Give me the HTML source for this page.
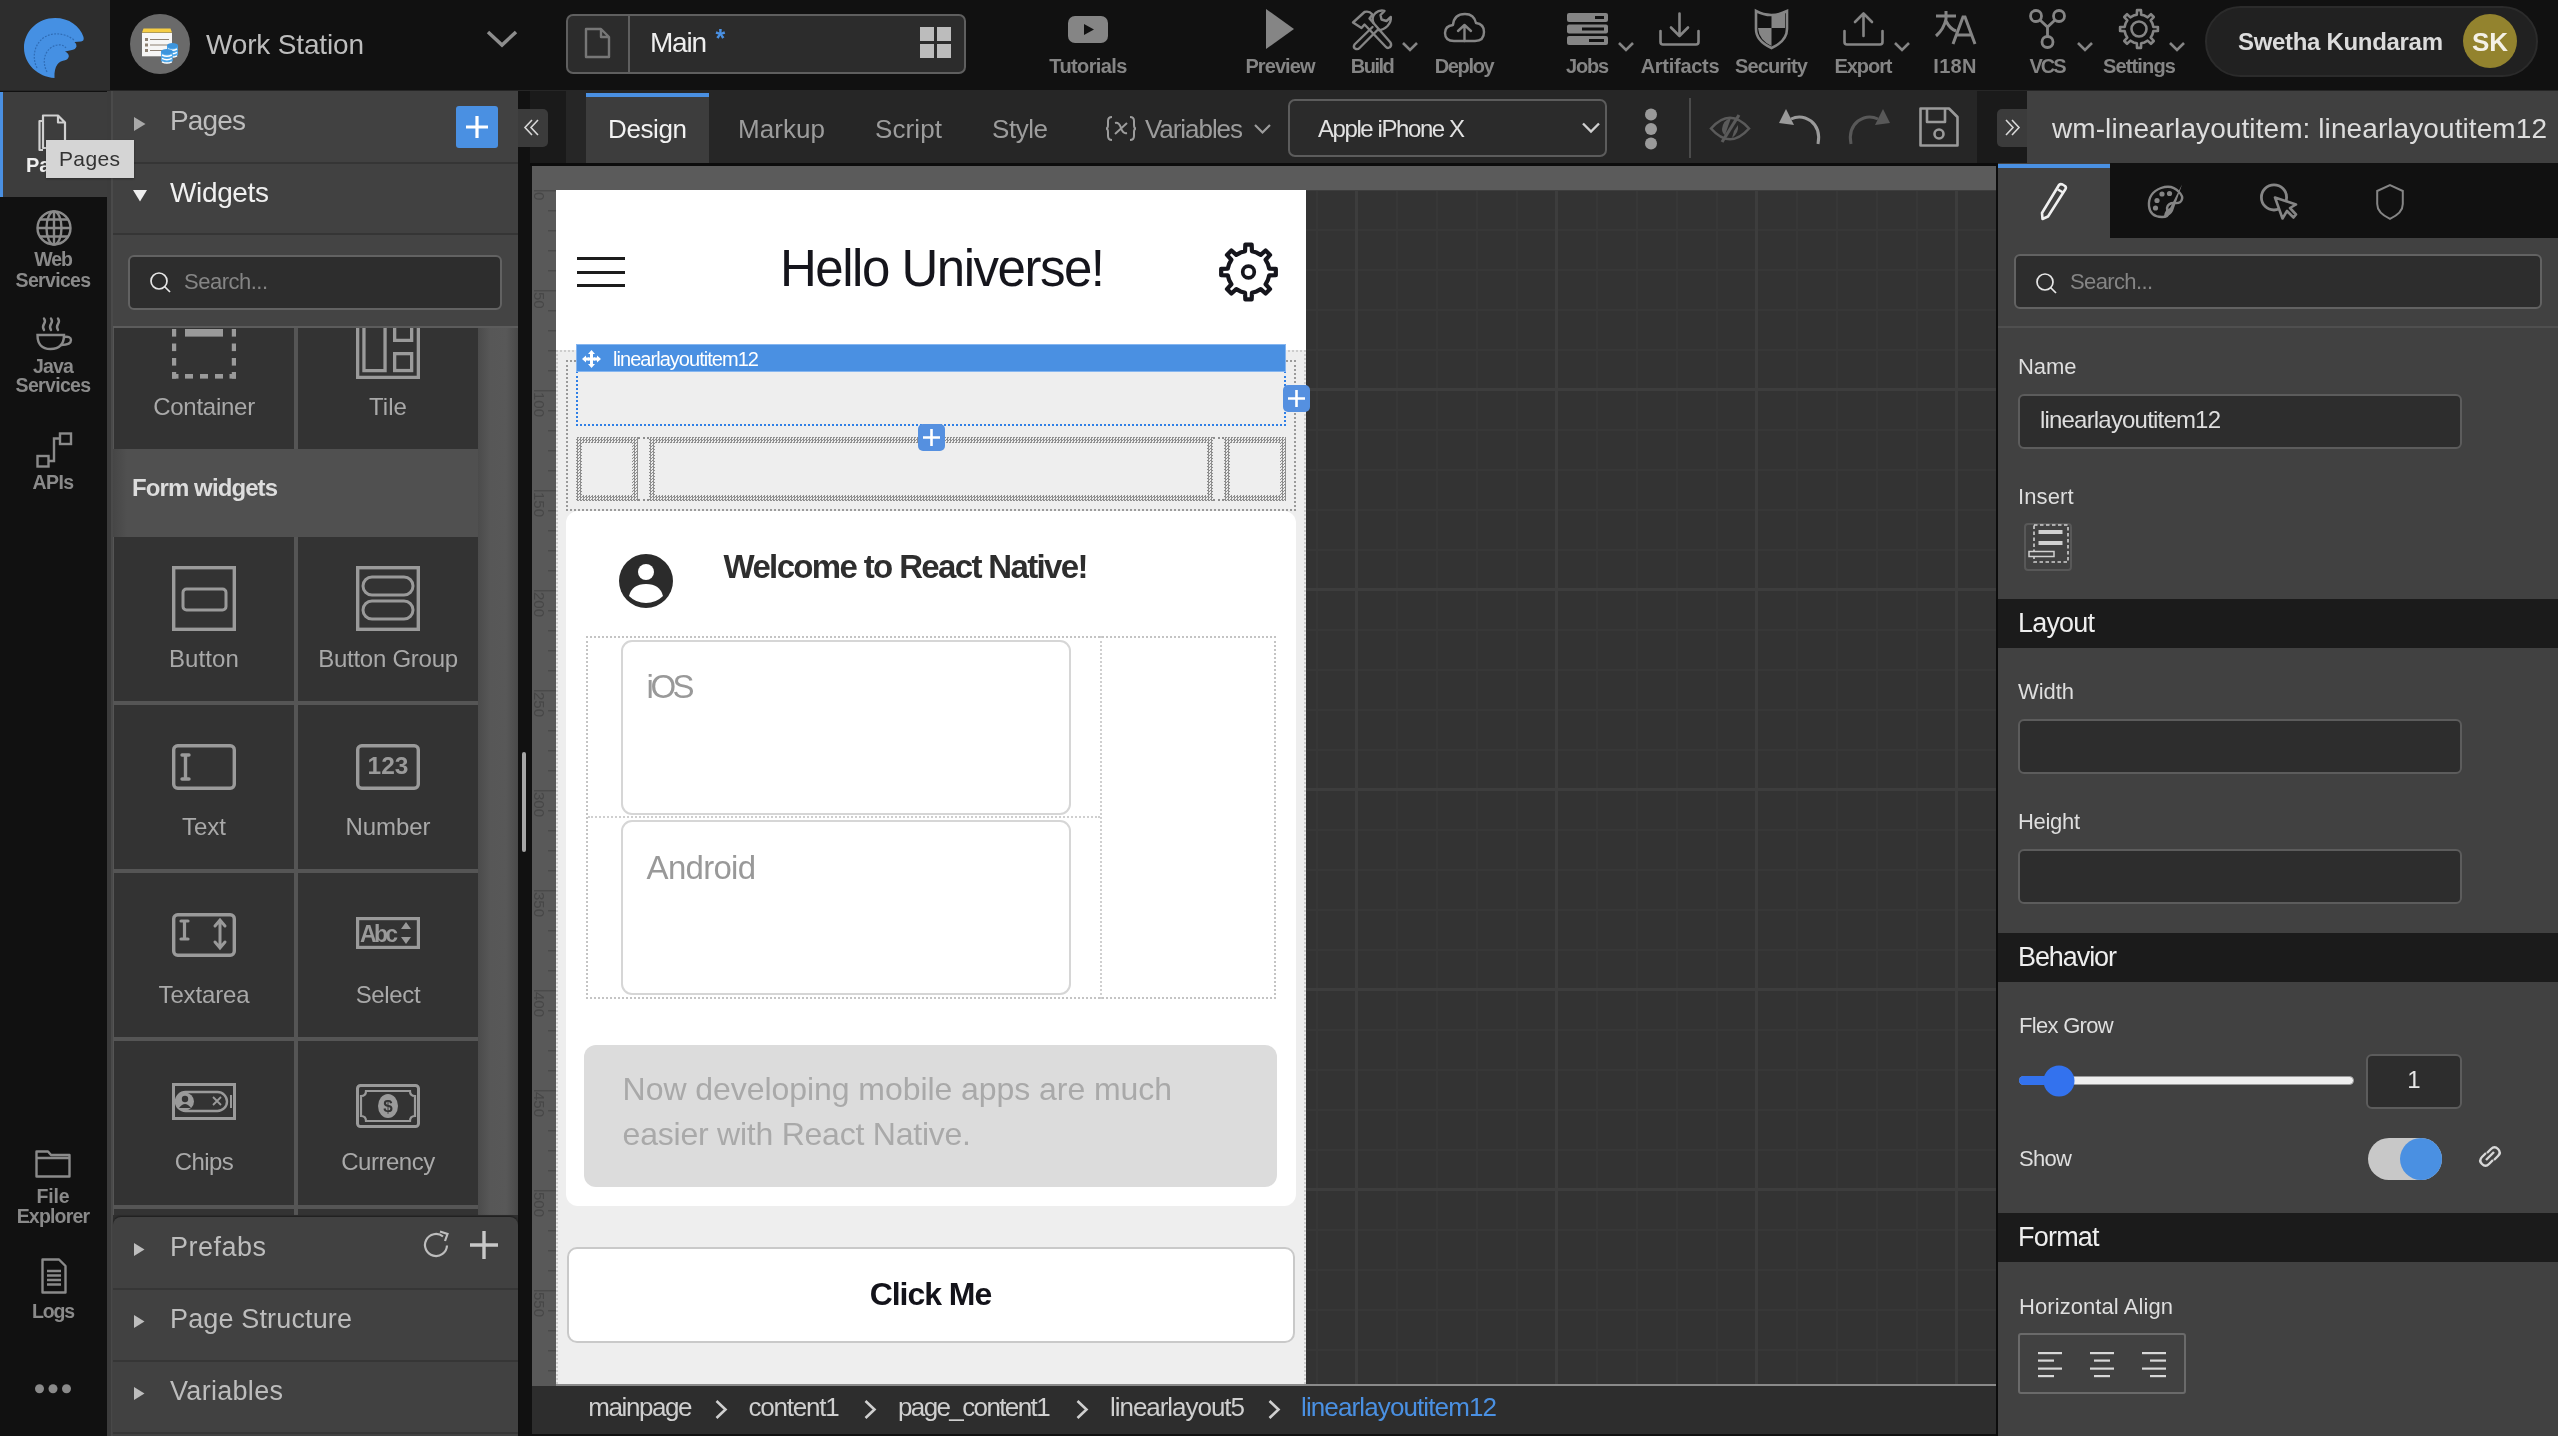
<!DOCTYPE html>
<html><head><meta charset="utf-8">
<style>
*{box-sizing:border-box;margin:0;padding:0}
html,body{width:2558px;height:1436px;overflow:hidden;background:#111;font-family:"Liberation Sans",sans-serif}
.a{position:absolute}
svg{position:absolute;overflow:visible}
</style></head>
<body>
<div style="position:absolute;left:0;top:0;width:2558px;height:1436px;overflow:hidden;will-change:transform">
<div class="a" style="left:0px;top:0px;width:2558px;height:90px;background:#111;"></div>
<div class="a" style="left:0px;top:0px;width:110px;height:90px;background:#2d2d2d;"></div>
<div class="a" style="left:0px;top:90px;width:2558px;height:1px;background:#262626;"></div>
<div class="a" style="left:0px;top:91px;width:107px;height:1345px;background:#111;"></div>
<div class="a" style="left:0px;top:92px;width:110px;height:105px;background:#3d3d3d;"></div>
<div class="a" style="left:0px;top:92px;width:3px;height:105px;background:#4a90e2;"></div>
<div class="a" style="left:107px;top:91px;width:5px;height:1345px;background:#3a3a3a;"></div>
<div class="a" style="left:112px;top:91px;width:406px;height:1345px;background:#414141;"></div>
<div class="a" style="left:518px;top:91px;width:14px;height:1345px;background:#111;"></div>
<div class="a" style="left:530px;top:91px;width:36px;height:72px;background:#1e1e1e;"></div>
<div class="a" style="left:566px;top:91px;width:1411px;height:72px;background:#262626;"></div>
<div class="a" style="left:1977px;top:91px;width:50px;height:72px;background:#111;"></div>
<div class="a" style="left:532px;top:166px;width:1464px;height:24px;background:#5b5b5b;"></div>
<div class="a" style="left:532px;top:190px;width:24px;height:1196px;background:#5a5a5a;"></div>
<div class="a" style="left:532px;top:1386px;width:1464px;height:50px;background:#2d2d2d;"></div>
<div class="a" style="left:1996px;top:163px;width:2px;height:1273px;background:#111;"></div>
<div class="a" style="left:2027px;top:91px;width:531px;height:72px;background:#404040;"></div>
<div class="a" style="left:1998px;top:163px;width:560px;height:75px;background:#111;"></div>
<div class="a" style="left:1998px;top:238px;width:560px;height:1198px;background:#414141;"></div>
<svg style="left:24px;top:18px;" width="61" height="61" viewBox="0 0 61 61"><path fill="#4590e3" d="M30.5 60 C14 59 0 46 0 30 C0 13 14 0 31 0 C45 0 56 8 59.5 19 Q60.5 23 57 23.5 L50.5 24 Q53 26 52.5 28.5 Q51.5 31.5 48 32 L41 33.5 Q45 35.5 44.8 38.5 Q44 42 40 42.5 C35 43.5 30 47 30.5 60 Z"/><path fill="none" stroke="#2f6cb5" stroke-width="1.2" stroke-dasharray="1.8 1.4" d="M13 50 C8 40 10 28 18 21 C26 14 40 14 50 22 M23 54 C18 44 20 34 28 29 C33 26 39 26 42 30"/></svg>
<svg style="left:130px;top:14px;" width="60" height="60" viewBox="0 0 60 60"><circle cx="30" cy="30" r="30" fill="#6a6a6a"/><path d="M12 42.3 V19 H42 V42.3 Z" fill="#f6f6f6"/><path d="M12 18.5 L13.5 14.5 H40.5 L42 18.5 Z" fill="#f5cd45"/><g fill="#8c8072"><rect x="15" y="24" width="3" height="3"/><rect x="15" y="29.5" width="3" height="3"/><rect x="15" y="35" width="3" height="3"/></g><g stroke="#8c8072" stroke-width="1"><line x1="20" y1="25.5" x2="39" y2="25.5"/><line x1="20" y1="31" x2="39" y2="31"/><line x1="20" y1="36.5" x2="36" y2="36.5"/></g><path d="M37 31.6 V40.4 A5.5 2.6 0 0 0 48 40.4 V31.6 Z" fill="#4ea6e8"/><ellipse cx="42.5" cy="31.6" rx="5.5" ry="2.6" fill="#3d95dd"/><path d="M38 35.0 Q42.5 37.6 47 35.0" fill="none" stroke="#fff" stroke-width="1.5"/><path d="M38 38.4 Q42.5 41.0 47 38.4" fill="none" stroke="#fff" stroke-width="1.5"/><path d="M38 41.8 Q42.5 44.4 47 41.8" fill="none" stroke="#fff" stroke-width="1.5"/><path d="M31 37.6 V46.4 A5.9 2.6 0 0 0 42.8 46.4 V37.6 Z" fill="#4ea6e8"/><ellipse cx="36.9" cy="37.6" rx="5.9" ry="2.6" fill="#3d95dd"/><path d="M32 41.0 Q36.9 43.6 41.8 41.0" fill="none" stroke="#fff" stroke-width="1.5"/><path d="M32 44.4 Q36.9 47.0 41.8 44.4" fill="none" stroke="#fff" stroke-width="1.5"/><path d="M32 47.8 Q36.9 50.4 41.8 47.8" fill="none" stroke="#fff" stroke-width="1.5"/></svg>
<div class="a" style="top:31.30px;font-size:28px;color:#bdbdbd;font-weight:normal;letter-spacing:-0.161px;line-height:1;white-space:nowrap;left:206px;">Work Station</div>
<svg style="left:486px;top:30px;" width="32" height="18" viewBox="0 0 32 18"><path d="M2 2 L16 15 L30 2" fill="none" stroke="#8d8d8d" stroke-width="3.5"/></svg>
<div class="a" style="left:566px;top:14px;width:400px;height:60px;background:#2c2c2c;border:2px solid #5f5f5f;border-radius:7px"></div>
<div class="a" style="left:628px;top:16px;width:2px;height:56px;background:#5f5f5f;"></div>
<svg style="left:584px;top:27px;" width="27" height="32" viewBox="0 0 27 32"><path d="M2 2 H17 L25 10 V30 H2 Z M17 2 V10 H25" fill="none" stroke="#777" stroke-width="2.4" stroke-linejoin="round"/></svg>
<div class="a" style="top:29.30px;font-size:28px;color:#eeeeee;font-weight:normal;letter-spacing:-1.231px;line-height:1;white-space:nowrap;left:650px;">Main</div>
<div class="a" style="top:25.84px;font-size:25px;color:#4a90e2;font-weight:bold;letter-spacing:0.000px;line-height:1;white-space:nowrap;left:715.5px;">*</div>
<svg style="left:920px;top:27px;" width="32" height="32" viewBox="0 0 32 32"><g fill="#bcbcbc"><rect x="0" y="0" width="14" height="14"/><rect x="17" y="0" width="14" height="14"/><rect x="0" y="17" width="14" height="14"/><rect x="17" y="17" width="14" height="14"/></g></svg>
<svg style="left:1068px;top:16px;" width="40" height="27" viewBox="0 0 40 27"><rect x="0" y="0" width="40" height="27" rx="7" fill="#858585"/><path d="M16 8 L26 13.5 L16 19 Z" fill="#111"/></svg>
<div class="a" style="top:56.07px;font-size:20px;color:#858585;font-weight:bold;letter-spacing:-0.621px;line-height:1;white-space:nowrap;left:488px;width:1200px;text-align:center;">Tutorials</div>
<svg style="left:1266px;top:9px;" width="28" height="40" viewBox="0 0 28 40"><path d="M0 0 L28 20 L0 40 Z" fill="#858585"/></svg>
<div class="a" style="top:56.07px;font-size:20px;color:#858585;font-weight:bold;letter-spacing:-0.934px;line-height:1;white-space:nowrap;left:680px;width:1200px;text-align:center;">Preview</div>
<svg style="left:1352px;top:9px;" width="40" height="40" viewBox="0 0 40 40"><g fill="none" stroke="#858585" stroke-width="2.4" stroke-linejoin="round" stroke-linecap="round"><path d="M1 13.5 L12.5 3 Q17 1.5 20.5 5.5 L17.5 9.5 L38.5 33.5 Q40 36.5 37.8 38.3 Q35.5 39.8 33.5 37.5 L12.5 15.5 L9.5 19 Z"/><path d="M20.5 18 L2.5 35.5 Q1 38 3 39.5 Q5.5 41 7.5 39 L25.5 21 Q31 21.5 35.5 17 Q39.5 12.5 38.8 8 L34.5 12 L29.5 10.5 L28.5 6 L32.5 1.8 Q27.5 0.5 23.5 4 Q19 8.5 21.5 14"/></g></svg>
<svg style="left:1402px;top:42px;" width="16" height="9" viewBox="0 0 16 9"><path d="M1 1 L8 8 L15 1" fill="none" stroke="#858585" stroke-width="2.6"/></svg>
<div class="a" style="top:56.07px;font-size:20px;color:#858585;font-weight:bold;letter-spacing:-1.498px;line-height:1;white-space:nowrap;left:772px;width:1200px;text-align:center;">Build</div>
<svg style="left:1444px;top:12px;" width="41" height="31" viewBox="0 0 41 31"><g fill="none" stroke="#858585" stroke-width="2.4" stroke-linejoin="round" stroke-linecap="round"><path d="M10 29 Q1 29 1 21 Q1 14 9 13 Q10 2 21 2 Q30 2 32 11 Q40 12 40 20 Q40 29 31 29 Z"/><path d="M20.5 29 V13 M14 19 L20.5 13 L27 19"/></g></svg>
<div class="a" style="top:56.07px;font-size:20px;color:#858585;font-weight:bold;letter-spacing:-1.336px;line-height:1;white-space:nowrap;left:864px;width:1200px;text-align:center;">Deploy</div>
<svg style="left:1567px;top:13px;" width="41" height="32" viewBox="0 0 41 32"><g fill="#858585"><rect x="0" y="0" width="41" height="9" rx="2"/><rect x="0" y="11.5" width="41" height="9" rx="2"/><rect x="0" y="23" width="41" height="9" rx="2"/></g><g fill="#111"><rect x="28" y="3" width="9" height="3"/><rect x="15" y="14.5" width="22" height="3"/><rect x="22" y="26" width="15" height="3"/></g></svg>
<svg style="left:1618px;top:42px;" width="16" height="9" viewBox="0 0 16 9"><path d="M1 1 L8 8 L15 1" fill="none" stroke="#858585" stroke-width="2.6"/></svg>
<div class="a" style="top:56.07px;font-size:20px;color:#858585;font-weight:bold;letter-spacing:-1.227px;line-height:1;white-space:nowrap;left:987px;width:1200px;text-align:center;">Jobs</div>
<svg style="left:1659px;top:12px;" width="41" height="34" viewBox="0 0 41 34"><g fill="none" stroke="#858585" stroke-width="2.6" stroke-linecap="round" stroke-linejoin="round"><path d="M1.5 19 V30 Q1.5 32.5 4 32.5 H37 Q39.5 32.5 39.5 30 V19"/><path d="M20.5 1.5 V24 M12 15.5 L20.5 24 L29 15.5"/></g></svg>
<div class="a" style="top:56.07px;font-size:20px;color:#858585;font-weight:bold;letter-spacing:-0.267px;line-height:1;white-space:nowrap;left:1080px;width:1200px;text-align:center;">Artifacts</div>
<svg style="left:1754px;top:9px;" width="35" height="40" viewBox="0 0 35 40"><path d="M2 2 Q17 10 33 2 V20 Q33 32 17.5 39 Q2 32 2 20 Z" fill="none" stroke="#858585" stroke-width="2.6"/><path d="M17.5 6 Q26 6 31 3.5 V19 H17.5 Z M17.5 19 H4 Q5 31 17.5 37 Z" fill="#858585"/></svg>
<div class="a" style="top:56.07px;font-size:20px;color:#858585;font-weight:bold;letter-spacing:-0.847px;line-height:1;white-space:nowrap;left:1171px;width:1200px;text-align:center;">Security</div>
<svg style="left:1843px;top:12px;" width="41" height="34" viewBox="0 0 41 34"><g fill="none" stroke="#858585" stroke-width="2.6" stroke-linecap="round" stroke-linejoin="round"><path d="M1.5 19 V30 Q1.5 32.5 4 32.5 H37 Q39.5 32.5 39.5 30 V19"/><path d="M20.5 24 V1.5 M12 10 L20.5 1.5 L29 10"/></g></svg>
<svg style="left:1894px;top:42px;" width="16" height="9" viewBox="0 0 16 9"><path d="M1 1 L8 8 L15 1" fill="none" stroke="#858585" stroke-width="2.6"/></svg>
<div class="a" style="top:56.07px;font-size:20px;color:#858585;font-weight:bold;letter-spacing:-1.068px;line-height:1;white-space:nowrap;left:1263px;width:1200px;text-align:center;">Export</div>
<svg style="left:1935px;top:11px;" width="42" height="34" viewBox="0 0 42 34"><g fill="none" stroke="#858585" stroke-width="3" stroke-linecap="butt"><path d="M1 5 H21 M11 0 V8 Q9 18 1 25 M11 10 Q15 18 21 20"/><path d="M18 33 L28 6 H30 L40 33 M22 24 H36"/></g></svg>
<div class="a" style="top:56.07px;font-size:20px;color:#858585;font-weight:bold;letter-spacing:0.251px;line-height:1;white-space:nowrap;left:1355px;width:1200px;text-align:center;">I18N</div>
<svg style="left:2029px;top:9px;" width="37" height="40" viewBox="0 0 37 40"><g fill="none" stroke="#858585" stroke-width="2.8"><circle cx="7" cy="7" r="5.5"/><circle cx="30" cy="7" r="5.5"/><circle cx="18.5" cy="33" r="5.5"/><path d="M11 11 L18.5 18 L26 11 M18.5 18 V27.5"/></g></svg>
<svg style="left:2077px;top:42px;" width="16" height="9" viewBox="0 0 16 9"><path d="M1 1 L8 8 L15 1" fill="none" stroke="#858585" stroke-width="2.6"/></svg>
<div class="a" style="top:56.07px;font-size:20px;color:#858585;font-weight:bold;letter-spacing:-2.062px;line-height:1;white-space:nowrap;left:1447px;width:1200px;text-align:center;">VCS</div>
<svg style="left:2119px;top:9px;" width="40" height="40" viewBox="0 0 40 40"><path d="M34.34 17.84 L38.90 18.02 L38.90 21.98 L34.34 22.16 L33.40 25.55 L31.66 28.61 L34.76 31.96 L31.96 34.76 L28.61 31.66 L25.55 33.40 L22.16 34.34 L21.98 38.90 L18.02 38.90 L17.84 34.34 L14.45 33.40 L11.39 31.66 L8.04 34.76 L5.24 31.96 L8.34 28.61 L6.60 25.55 L5.66 22.16 L1.10 21.98 L1.10 18.02 L5.66 17.84 L6.60 14.45 L8.34 11.39 L5.24 8.04 L8.04 5.24 L11.39 8.34 L14.45 6.60 L17.84 5.66 L18.02 1.10 L21.98 1.10 L22.16 5.66 L25.55 6.60 L28.61 8.34 L31.96 5.24 L34.76 8.04 L31.66 11.39 L33.40 14.45 Z" fill="none" stroke="#858585" stroke-width="2.6" stroke-linejoin="round"/><circle cx="20" cy="20" r="7.5" fill="none" stroke="#858585" stroke-width="2.6"/></svg>
<svg style="left:2169px;top:42px;" width="16" height="9" viewBox="0 0 16 9"><path d="M1 1 L8 8 L15 1" fill="none" stroke="#858585" stroke-width="2.6"/></svg>
<div class="a" style="top:56.07px;font-size:20px;color:#858585;font-weight:bold;letter-spacing:-0.843px;line-height:1;white-space:nowrap;left:1539px;width:1200px;text-align:center;">Settings</div>
<div class="a" style="left:2205px;top:6px;width:333px;height:71px;background:#212121;border:2px solid #2b2b2b;border-radius:36px"></div>
<div class="a" style="top:29.68px;font-size:24px;color:#dcdcdc;font-weight:bold;letter-spacing:-0.313px;line-height:1;white-space:nowrap;left:2238px;">Swetha Kundaram</div>
<svg style="left:2463px;top:14px;" width="54" height="54" viewBox="0 0 54 54"><circle cx="27" cy="27" r="27" fill="#93832e"/></svg>
<div class="a" style="top:28.99px;font-size:26px;color:#f4f1e6;font-weight:bold;letter-spacing:0.000px;line-height:1;white-space:nowrap;left:1890px;width:1200px;text-align:center;">SK</div>
<div class="a" style="left:530px;top:91px;width:36px;height:72px;background:#1a1a1a;"></div>
<div class="a" style="left:586px;top:93px;width:123px;height:70px;background:#3d3d3d;"></div>
<div class="a" style="left:586px;top:93px;width:123px;height:4px;background:#4a90e2;"></div>
<div class="a" style="left:518px;top:109px;width:30px;height:38px;background:#3b3b3b;border-radius:0 5px 5px 0"></div>
<svg style="left:524px;top:119px;" width="15" height="17" viewBox="0 0 15 17"><path d="M8 1 L1 8.5 L8 16 M14 1 L7 8.5 L14 16" fill="none" stroke="#d8d8d8" stroke-width="1.6"/></svg>
<div class="a" style="top:115.99px;font-size:26px;color:#f2f2f2;font-weight:normal;letter-spacing:-0.387px;line-height:1;white-space:nowrap;left:608px;">Design</div>
<div class="a" style="top:115.99px;font-size:26px;color:#9c9c9c;font-weight:normal;letter-spacing:0.060px;line-height:1;white-space:nowrap;left:738px;">Markup</div>
<div class="a" style="top:115.99px;font-size:26px;color:#9c9c9c;font-weight:normal;letter-spacing:0.107px;line-height:1;white-space:nowrap;left:875px;">Script</div>
<div class="a" style="top:115.99px;font-size:26px;color:#9c9c9c;font-weight:normal;letter-spacing:-0.451px;line-height:1;white-space:nowrap;left:992px;">Style</div>
<svg style="left:1106px;top:116px;" width="30" height="25" viewBox="0 0 30 25"><g fill="none" stroke="#9c9c9c" stroke-width="2"><path d="M6 1 Q2 1 2 5 V9 Q2 12.5 0 12.5 Q2 12.5 2 16 V20 Q2 24 6 24"/><path d="M24 1 Q28 1 28 5 V9 Q28 12.5 30 12.5 Q28 12.5 28 16 V20 Q28 24 24 24"/><path d="M9 7 Q13 6 15 12 Q17 18 21 17 M21 7 L9 18"/></g></svg>
<div class="a" style="top:115.99px;font-size:26px;color:#9c9c9c;font-weight:normal;letter-spacing:-1.058px;line-height:1;white-space:nowrap;left:1145px;">Variables</div>
<svg style="left:1254px;top:124px;" width="17" height="10" viewBox="0 0 17 10"><path d="M1 1 L8.5 8.5 L16 1" fill="none" stroke="#9c9c9c" stroke-width="2.2"/></svg>
<div class="a" style="left:1288px;top:99px;width:319px;height:58px;background:#2b2b2b;border:2px solid #5c5c5c;border-radius:7px"></div>
<div class="a" style="top:116.68px;font-size:24px;color:#e2e2e2;font-weight:normal;letter-spacing:-1.420px;line-height:1;white-space:nowrap;left:1318px;">Apple iPhone X</div>
<svg style="left:1582px;top:122px;" width="18" height="11" viewBox="0 0 18 11"><path d="M1 1.5 L9 9.5 L17 1.5" fill="none" stroke="#cfcfcf" stroke-width="2.4"/></svg>
<svg style="left:1645px;top:108px;" width="12" height="42" viewBox="0 0 12 42"><g fill="#9a9a9a"><circle cx="6" cy="6.5" r="6"/><circle cx="6" cy="21" r="6"/><circle cx="6" cy="35.5" r="6"/></g></svg>
<div class="a" style="left:1689px;top:98px;width:2px;height:60px;background:#4b4b4b;"></div>
<svg style="left:1710px;top:113px;" width="40" height="31" viewBox="0 0 40 31"><g fill="none" stroke="#5a5a5a" stroke-width="2.6"><path d="M1 15.5 Q20 -6 39 15.5 Q20 37 1 15.5 Z"/></g><path d="M12 16 Q13 7 21 5 L15 22 Q12 20 12 16 Z M28 12 Q29 20 22 25 L24 18 Z" fill="#5a5a5a"/><line x1="29" y1="2" x2="12" y2="29" stroke="#5a5a5a" stroke-width="3.2"/></svg>
<svg style="left:1779px;top:109px;" width="41" height="36" viewBox="0 0 41 36"><path d="M39 35 Q42 20 32 12 Q22 5 12 10" fill="none" stroke="#9a9a9a" stroke-width="3"/><path d="M0 14 L7 0 L15 16 Z" fill="#9a9a9a"/></svg>
<svg style="left:1849px;top:109px;" width="41" height="36" viewBox="0 0 41 36"><path d="M2 35 Q-1 20 9 12 Q19 5 29 10" fill="none" stroke="#585858" stroke-width="3"/><path d="M41 14 L34 0 L26 16 Z" fill="#585858"/></svg>
<svg style="left:1919px;top:107px;" width="40" height="40" viewBox="0 0 40 40"><g fill="none" stroke="#9a9a9a" stroke-width="2.6" stroke-linejoin="round"><path d="M1.5 1.5 H30 L38.5 10 V38.5 H1.5 Z"/><path d="M8 1.5 V15 H26 V1.5"/><circle cx="20" cy="27" r="4.5"/></g></svg>
<div class="a" style="left:1977px;top:91px;width:50px;height:72px;background:#1a1a1a;"></div>
<div class="a" style="left:1997px;top:109px;width:30px;height:38px;background:#3b3b3b;border-radius:5px 0 0 5px"></div>
<svg style="left:2005px;top:119px;" width="15" height="17" viewBox="0 0 15 17"><path d="M1 1 L8 8.5 L1 16 M7 1 L14 8.5 L7 16" fill="none" stroke="#d8d8d8" stroke-width="1.6"/></svg>
<div class="a" style="top:115.30px;font-size:28px;color:#dddddd;font-weight:normal;letter-spacing:0.085px;line-height:1;white-space:nowrap;left:2052px;">wm-linearlayoutitem: linearlayoutitem12</div>
<svg style="left:38px;top:114px;" width="32" height="38" viewBox="0 0 32 38"><g fill="none" stroke="#d0d0d0" stroke-width="2.2" stroke-linejoin="round"><path d="M5 36 H1.5 V7 H5"/><path d="M5 1.5 H20 L27 8.5 V34 H5 Z M20 1.5 V8.5 H27"/></g></svg>
<div class="a" style="top:155.07px;font-size:20px;color:#eeeeee;font-weight:bold;letter-spacing:0.000px;line-height:1;white-space:nowrap;left:26px;">Pages</div>
<svg style="left:36px;top:210px;" width="36" height="36" viewBox="0 0 36 36"><g fill="none" stroke="#8a8a8a" stroke-width="2.4"><circle cx="18" cy="18" r="16.5"/><ellipse cx="18" cy="18" rx="7.5" ry="16.5"/><line x1="18" y1="1.5" x2="18" y2="34.5"/><line x1="1.5" y1="18" x2="34.5" y2="18"/><path d="M4 9.5 H32 M4 26.5 H32"/></g></svg>
<div class="a" style="top:250.49px;font-size:19.5px;color:#8a8a8a;font-weight:bold;letter-spacing:-1.155px;line-height:1;white-space:nowrap;left:-547px;width:1200px;text-align:center;">Web</div>
<div class="a" style="top:270.99px;font-size:19.5px;color:#8a8a8a;font-weight:bold;letter-spacing:-0.677px;line-height:1;white-space:nowrap;left:-547px;width:1200px;text-align:center;">Services</div>
<svg style="left:36px;top:318px;" width="36" height="33" viewBox="0 0 36 33"><g fill="none" stroke="#8a8a8a" stroke-width="2.4" stroke-linecap="round"><path d="M1.5 17 H28 Q28 31 14.5 31 Q1.5 31 1.5 17 Z"/><path d="M28 19 Q35 18 35 22 Q35 27 25 27"/><path d="M8 12 Q6 9 8 6 Q10 3 8 0.5 M15 12 Q13 9 15 6 Q17 3 15 0.5 M22 12 Q20 9 22 6 Q24 3 22 0.5"/></g></svg>
<div class="a" style="top:356.99px;font-size:19.5px;color:#8a8a8a;font-weight:bold;letter-spacing:-0.794px;line-height:1;white-space:nowrap;left:-547px;width:1200px;text-align:center;">Java</div>
<div class="a" style="top:376.49px;font-size:19.5px;color:#8a8a8a;font-weight:bold;letter-spacing:-0.677px;line-height:1;white-space:nowrap;left:-547px;width:1200px;text-align:center;">Services</div>
<svg style="left:36px;top:432px;" width="36" height="36" viewBox="0 0 36 36"><g fill="none" stroke="#8a8a8a" stroke-width="2.4"><rect x="1.5" y="24" width="11" height="10.5"/><rect x="24" y="1.5" width="11" height="10.5"/><path d="M12.5 29 H18 V6.5 H24"/></g></svg>
<div class="a" style="top:472.99px;font-size:19.5px;color:#8a8a8a;font-weight:bold;letter-spacing:-0.617px;line-height:1;white-space:nowrap;left:-547px;width:1200px;text-align:center;">APIs</div>
<svg style="left:35px;top:1150px;" width="36" height="28" viewBox="0 0 36 28"><path d="M1.5 26.5 V1.5 H13 L16 5 H34.5 V26.5 Z M1.5 8 H34.5" fill="none" stroke="#8a8a8a" stroke-width="2.4" stroke-linejoin="round"/></svg>
<div class="a" style="top:1186.99px;font-size:19.5px;color:#8a8a8a;font-weight:bold;letter-spacing:-0.197px;line-height:1;white-space:nowrap;left:-547px;width:1200px;text-align:center;">File</div>
<div class="a" style="top:1207.49px;font-size:19.5px;color:#8a8a8a;font-weight:bold;letter-spacing:-0.802px;line-height:1;white-space:nowrap;left:-547px;width:1200px;text-align:center;">Explorer</div>
<svg style="left:41px;top:1258px;" width="26" height="36" viewBox="0 0 26 36"><g fill="none" stroke="#8a8a8a" stroke-width="2.4" stroke-linejoin="round"><path d="M1.5 1.5 H18 L24.5 8 V34.5 H1.5 Z"/><path d="M6 13 H20 M6 17.5 H20 M6 22 H20 M6 26.5 H20"/></g></svg>
<div class="a" style="top:1302.49px;font-size:19.5px;color:#8a8a8a;font-weight:bold;letter-spacing:-1.194px;line-height:1;white-space:nowrap;left:-547px;width:1200px;text-align:center;">Logs</div>
<svg style="left:35px;top:1384px;" width="36" height="10" viewBox="0 0 36 10"><g fill="#8a8a8a"><circle cx="4.5" cy="4.8" r="4.5"/><circle cx="18" cy="4.8" r="4.5"/><circle cx="31.5" cy="4.8" r="4.5"/></g></svg>
<div class="a" style="left:107px;top:91px;width:4px;height:1345px;background:#3c3c3c;"></div>
<div class="a" style="left:111px;top:91px;width:2px;height:1345px;background:#4a4a4a;"></div>
<div class="a" style="left:113px;top:91px;width:405px;height:72px;background:#414141;"></div>
<div class="a" style="left:113px;top:162px;width:405px;height:2px;background:#353535;"></div>
<svg style="left:134px;top:117px;" width="12" height="14" viewBox="0 0 12 14"><path d="M0 0 L11.5 7 L0 14 Z" fill="#a8a8a8"/></svg>
<div class="a" style="top:107.30px;font-size:28px;color:#bdbdbd;font-weight:normal;letter-spacing:-0.849px;line-height:1;white-space:nowrap;left:170px;">Pages</div>
<div class="a" style="left:456px;top:106px;width:42px;height:42px;background:#4a90e2;border-radius:3px"></div>
<svg style="left:465px;top:115px;" width="24" height="24" viewBox="0 0 24 24"><path d="M12 1 V23 M1 12 H23" stroke="#fff" stroke-width="3.2"/></svg>
<div class="a" style="left:113px;top:164px;width:405px;height:70px;background:#414141;"></div>
<div class="a" style="left:113px;top:233px;width:405px;height:2px;background:#353535;"></div>
<svg style="left:133px;top:190px;" width="14" height="12" viewBox="0 0 14 12"><path d="M0 0 L14 0 L7 11.5 Z" fill="#eeeeee"/></svg>
<div class="a" style="top:179.30px;font-size:28px;color:#f0f0f0;font-weight:normal;letter-spacing:-0.358px;line-height:1;white-space:nowrap;left:170px;">Widgets</div>
<div class="a" style="left:113px;top:235px;width:405px;height:92px;background:#444;"></div>
<div class="a" style="left:128px;top:255px;width:374px;height:55px;background:#2d2d2d;border:2px solid #626262;border-radius:6px"></div>
<svg style="left:150px;top:272px;" width="21" height="21" viewBox="0 0 21 21"><circle cx="9" cy="9" r="8" fill="none" stroke="#e6e6e6" stroke-width="1.7"/><path d="M14.5 14.5 L20 20" stroke="#e6e6e6" stroke-width="1.7"/></svg>
<div class="a" style="top:271.38px;font-size:22px;color:#858585;font-weight:normal;letter-spacing:-0.506px;line-height:1;white-space:nowrap;left:184px;">Search...</div>
<div class="a" style="left:0;top:0;width:2558px;height:1436px;clip-path:inset(326px 2040px 219px 113px)">
<div class="a" style="left:113px;top:326px;width:405px;height:891px;background:#555;"></div>
<div class="a" style="left:478px;top:328px;width:40px;height:889px;background:linear-gradient(90deg,#4b4b4b 0px,#575757 12px,#585858 28px,#4a4a4a 40px);"></div>
<div class="a" style="left:114px;top:285px;width:180px;height:164px;background:#333333;"></div>
<div class="a" style="left:298px;top:285px;width:180px;height:164px;background:#333333;"></div>
<svg style="left:172px;top:318px;" width="64" height="62" viewBox="0 0 64 62"><g fill="#9a9a9a"><rect x="13" y="11" width="38" height="7.6"/><rect x="0" y="11" width="4.2" height="7.6"/><rect x="59.8" y="11" width="4.2" height="7.6"/><rect x="0" y="25.5" width="4.2" height="7.6"/><rect x="59.8" y="25.5" width="4.2" height="7.6"/><rect x="0" y="40" width="4.2" height="7.6"/><rect x="59.8" y="40" width="4.2" height="7.6"/><rect x="0" y="54" width="4.2" height="6.6"/><rect x="0" y="56" width="6.5" height="4.6"/><rect x="59.8" y="54" width="4.2" height="6.6"/><rect x="57.5" y="56" width="6.5" height="4.6"/><rect x="13" y="56" width="8" height="4.6"/><rect x="28" y="56" width="8" height="4.6"/><rect x="43" y="56" width="8" height="4.6"/></g></svg>
<div class="a" style="top:394.68px;font-size:24px;color:#a9a9a9;font-weight:normal;letter-spacing:-0.258px;line-height:1;white-space:nowrap;left:-396px;width:1200px;text-align:center;">Container</div>
<svg style="left:356px;top:318px;" width="64" height="62" viewBox="0 0 64 62"><g fill="none" stroke="#9a9a9a" stroke-width="3.3"><path d="M1.65 0 V59.35 H62.35 V0"/><path d="M7.95 0 V52.55 H29.05 V0"/><path d="M38.65 0 V22.35 H55.65 V0"/><rect x="38.65" y="35.65" width="17" height="16.9"/></g></svg>
<div class="a" style="top:394.68px;font-size:24px;color:#a9a9a9;font-weight:normal;letter-spacing:0.072px;line-height:1;white-space:nowrap;left:-212px;width:1200px;text-align:center;">Tile</div>
<div class="a" style="left:113px;top:449px;width:365px;height:88px;background:#505050;"></div>
<div class="a" style="left:113px;top:449px;width:14px;height:88px;background:linear-gradient(90deg,#464646,#505050);"></div>
<div class="a" style="top:475.68px;font-size:24px;color:#dddddd;font-weight:bold;letter-spacing:-0.910px;line-height:1;white-space:nowrap;left:132px;">Form widgets</div>
<div class="a" style="left:114px;top:537px;width:180px;height:164px;background:#333333;"></div>
<div class="a" style="left:298px;top:537px;width:180px;height:164px;background:#333333;"></div>
<div class="a" style="left:114px;top:705px;width:180px;height:164px;background:#333333;"></div>
<div class="a" style="left:298px;top:705px;width:180px;height:164px;background:#333333;"></div>
<div class="a" style="left:114px;top:873px;width:180px;height:164px;background:#333333;"></div>
<div class="a" style="left:298px;top:873px;width:180px;height:164px;background:#333333;"></div>
<div class="a" style="left:114px;top:1041px;width:180px;height:164px;background:#333333;"></div>
<div class="a" style="left:298px;top:1041px;width:180px;height:164px;background:#333333;"></div>
<div class="a" style="left:114px;top:1209px;width:180px;height:164px;background:#333333;"></div>
<div class="a" style="left:298px;top:1209px;width:180px;height:164px;background:#333333;"></div>
<svg style="left:172px;top:566px;" width="64" height="65" viewBox="0 0 64 65"><g fill="none" stroke="#9a9a9a" stroke-width="3.4"><rect x="1.7" y="1.7" width="60.6" height="61.6"/><rect x="11" y="23" width="43" height="21" rx="3.5" stroke-width="3"/></g></svg>
<div class="a" style="top:646.68px;font-size:24px;color:#a9a9a9;font-weight:normal;letter-spacing:0.122px;line-height:1;white-space:nowrap;left:-396px;width:1200px;text-align:center;">Button</div>
<svg style="left:356px;top:566px;" width="64" height="65" viewBox="0 0 64 65"><g fill="none" stroke="#9a9a9a" stroke-width="3.4"><rect x="1.7" y="1.7" width="60.6" height="61.6"/><rect x="7" y="11" width="50" height="18" rx="9" stroke-width="3"/><rect x="7" y="35" width="50" height="18" rx="9" stroke-width="3"/></g></svg>
<div class="a" style="top:646.68px;font-size:24px;color:#a9a9a9;font-weight:normal;letter-spacing:-0.251px;line-height:1;white-space:nowrap;left:-212px;width:1200px;text-align:center;">Button Group</div>
<svg style="left:172px;top:744px;" width="64" height="46" viewBox="0 0 64 46"><g fill="none" stroke="#9a9a9a" stroke-width="3.4"><rect x="1.7" y="1.7" width="60.6" height="42.6" rx="4"/></g><path d="M10 11 H17 M13.5 11 V35 M10 35 H17" stroke="#9a9a9a" stroke-width="3.4" fill="none" stroke-linecap="round"/></svg>
<div class="a" style="top:814.68px;font-size:24px;color:#a9a9a9;font-weight:normal;letter-spacing:-0.005px;line-height:1;white-space:nowrap;left:-396px;width:1200px;text-align:center;">Text</div>
<svg style="left:356px;top:744px;" width="64" height="46" viewBox="0 0 64 46"><g fill="none" stroke="#9a9a9a" stroke-width="3.4"><rect x="1.7" y="1.7" width="60.6" height="42.6" rx="4"/></g></svg>
<div class="a" style="top:754.26px;font-size:24.5px;color:#9a9a9a;font-weight:bold;letter-spacing:0.061px;line-height:1;white-space:nowrap;left:-212px;width:1200px;text-align:center;">123</div>
<div class="a" style="top:814.68px;font-size:24px;color:#a9a9a9;font-weight:normal;letter-spacing:-0.073px;line-height:1;white-space:nowrap;left:-212px;width:1200px;text-align:center;">Number</div>
<svg style="left:172px;top:913px;" width="64" height="44" viewBox="0 0 64 44"><g fill="none" stroke="#9a9a9a" stroke-width="3.4"><rect x="1.7" y="1.7" width="60.6" height="40.6" rx="4"/></g><path d="M9 8 H16 M12.5 8 V26 M9 26 H16" stroke="#9a9a9a" stroke-width="3.2" fill="none" stroke-linecap="round"/><path d="M48 8 V34 M43 13 L48 7 L53 13 M43 29 L48 35 L53 29" stroke="#9a9a9a" stroke-width="3" fill="none" stroke-linecap="round"/></svg>
<div class="a" style="top:982.68px;font-size:24px;color:#a9a9a9;font-weight:normal;letter-spacing:-0.150px;line-height:1;white-space:nowrap;left:-396px;width:1200px;text-align:center;">Textarea</div>
<svg style="left:356px;top:917px;" width="64" height="32" viewBox="0 0 64 32"><rect x="1.6" y="1.6" width="60.8" height="28.8" fill="none" stroke="#9a9a9a" stroke-width="3.2"/><path d="M50 5 L55 12 H45 Z M50 27 L55 20 H45 Z" fill="#9a9a9a"/></svg>
<div class="a" style="top:923.03px;font-size:23px;color:#9a9a9a;font-weight:bold;letter-spacing:-2.726px;line-height:1;white-space:nowrap;left:360px;">Abc</div>
<div class="a" style="top:982.68px;font-size:24px;color:#a9a9a9;font-weight:normal;letter-spacing:-0.341px;line-height:1;white-space:nowrap;left:-212px;width:1200px;text-align:center;">Select</div>
<svg style="left:172px;top:1083px;" width="64" height="37" viewBox="0 0 64 37"><rect x="1.5" y="1.5" width="61" height="34" fill="none" stroke="#9a9a9a" stroke-width="3"/><rect x="4" y="9" width="51" height="19" rx="9.5" fill="none" stroke="#9a9a9a" stroke-width="2.4"/><circle cx="13" cy="18.5" r="9" fill="#9a9a9a"/><circle cx="13" cy="16" r="3.2" fill="#333"/><path d="M7 25 Q13 17 19 25" fill="#333"/><path d="M41 14 L49 22 M49 14 L41 22" stroke="#9a9a9a" stroke-width="1.8"/><path d="M59 12 V25" stroke="#9a9a9a" stroke-width="2"/></svg>
<div class="a" style="top:1150.18px;font-size:24px;color:#a9a9a9;font-weight:normal;letter-spacing:-0.590px;line-height:1;white-space:nowrap;left:-396px;width:1200px;text-align:center;">Chips</div>
<svg style="left:356px;top:1084px;" width="64" height="44" viewBox="0 0 64 44"><rect x="1.5" y="1.5" width="61" height="41" rx="3" fill="none" stroke="#9a9a9a" stroke-width="3"/><path d="M10 7 H54 Q54 12 59 12 V32 Q54 32 54 37 H10 Q10 32 5 32 V12 Q10 12 10 7 Z" fill="none" stroke="#9a9a9a" stroke-width="2.2"/><ellipse cx="32" cy="22" rx="10" ry="12" fill="#9a9a9a"/></svg>
<div class="a" style="top:1097.61px;font-size:17px;color:#333;font-weight:bold;letter-spacing:0.000px;line-height:1;white-space:nowrap;left:-212px;width:1200px;text-align:center;">$</div>
<div class="a" style="top:1150.18px;font-size:24px;color:#a9a9a9;font-weight:normal;letter-spacing:-0.480px;line-height:1;white-space:nowrap;left:-212px;width:1200px;text-align:center;">Currency</div>
<div class="a" style="left:113px;top:326px;width:405px;height:2px;background:#5c5c5c;"></div>
</div>
<div class="a" style="left:522px;top:752px;width:4px;height:100px;background:#a5a5a5;border-radius:2px"></div>
<div class="a" style="left:113px;top:1215px;width:405px;height:221px;background:#2f2f2f;"></div>
<div class="a" style="left:113px;top:1217px;width:405px;height:219px;background:#414141;border-radius:8px 8px 0 0;box-shadow:0 -1px 2px rgba(0,0,0,.4)"></div>
<div class="a" style="left:113px;top:1288px;width:405px;height:2px;background:#363636;"></div>
<div class="a" style="left:113px;top:1360px;width:405px;height:2px;background:#363636;"></div>
<div class="a" style="left:113px;top:1432px;width:405px;height:2px;background:#363636;"></div>
<svg style="left:134px;top:1243px;" width="11" height="13" viewBox="0 0 11 13"><path d="M0 0 L10.5 6.5 L0 13 Z" fill="#bdbdbd"/></svg>
<div class="a" style="top:1233.54px;font-size:27px;color:#bdbdbd;font-weight:normal;letter-spacing:0.491px;line-height:1;white-space:nowrap;left:170px;">Prefabs</div>
<svg style="left:134px;top:1315px;" width="11" height="13" viewBox="0 0 11 13"><path d="M0 0 L10.5 6.5 L0 13 Z" fill="#bdbdbd"/></svg>
<div class="a" style="top:1305.54px;font-size:27px;color:#bdbdbd;font-weight:normal;letter-spacing:0.146px;line-height:1;white-space:nowrap;left:170px;">Page Structure</div>
<svg style="left:134px;top:1387px;" width="11" height="13" viewBox="0 0 11 13"><path d="M0 0 L10.5 6.5 L0 13 Z" fill="#bdbdbd"/></svg>
<div class="a" style="top:1377.54px;font-size:27px;color:#bdbdbd;font-weight:normal;letter-spacing:0.305px;line-height:1;white-space:nowrap;left:170px;">Variables</div>
<svg style="left:422px;top:1231px;" width="29" height="29" viewBox="0 0 29 29"><path d="M25 14.5 A11 11 0 1 1 21 5.5" fill="none" stroke="#bdbdbd" stroke-width="2.2"/><path d="M18 0.5 L25.5 3 L23 10" fill="none" stroke="#bdbdbd" stroke-width="2.2"/></svg>
<svg style="left:470px;top:1231px;" width="28" height="28" viewBox="0 0 28 28"><path d="M14 0 V28 M0 14 H28" stroke="#c8c8c8" stroke-width="3.4"/></svg>
<div class="a" style="left:530px;top:163px;width:1466px;height:3px;background:#0c0c0c;"></div>
<div class="a" style="left:532px;top:166px;width:1464px;height:24px;background:#5b5b5b;"></div>
<div class="a" style="left:532px;top:190px;width:24px;height:1196px;background:#595959;"></div>
<div class="a" style="left:556px;top:190px;width:1440px;height:1196px;background-color:#333;background-image:linear-gradient(90deg,#3d3d3d 3px,transparent 3px),linear-gradient(180deg,#3d3d3d 3px,transparent 3px),linear-gradient(90deg,#373737 2px,transparent 2px),linear-gradient(180deg,#373737 2px,transparent 2px);background-size:200px 200px,200px 200px,40px 40px,40px 40px;background-position:-1px 0,0 -2px,0 0,0 -1px"></div>
<svg style="left:532px;top:190px;" width="24" height="1196" viewBox="0 0 24 1196"><rect x="2" y="0" width="22" height="1.4" fill="#4a4a4a"/><rect x="16" y="20" width="8" height="1.4" fill="#4a4a4a"/><rect x="16" y="40" width="8" height="1.4" fill="#4a4a4a"/><rect x="16" y="60" width="8" height="1.4" fill="#4a4a4a"/><rect x="16" y="80" width="8" height="1.4" fill="#4a4a4a"/><rect x="2" y="100" width="22" height="1.4" fill="#4a4a4a"/><rect x="16" y="120" width="8" height="1.4" fill="#4a4a4a"/><rect x="16" y="140" width="8" height="1.4" fill="#4a4a4a"/><rect x="16" y="160" width="8" height="1.4" fill="#4a4a4a"/><rect x="16" y="180" width="8" height="1.4" fill="#4a4a4a"/><rect x="2" y="200" width="22" height="1.4" fill="#4a4a4a"/><rect x="16" y="220" width="8" height="1.4" fill="#4a4a4a"/><rect x="16" y="240" width="8" height="1.4" fill="#4a4a4a"/><rect x="16" y="260" width="8" height="1.4" fill="#4a4a4a"/><rect x="16" y="280" width="8" height="1.4" fill="#4a4a4a"/><rect x="2" y="300" width="22" height="1.4" fill="#4a4a4a"/><rect x="16" y="320" width="8" height="1.4" fill="#4a4a4a"/><rect x="16" y="340" width="8" height="1.4" fill="#4a4a4a"/><rect x="16" y="360" width="8" height="1.4" fill="#4a4a4a"/><rect x="16" y="380" width="8" height="1.4" fill="#4a4a4a"/><rect x="2" y="400" width="22" height="1.4" fill="#4a4a4a"/><rect x="16" y="420" width="8" height="1.4" fill="#4a4a4a"/><rect x="16" y="440" width="8" height="1.4" fill="#4a4a4a"/><rect x="16" y="460" width="8" height="1.4" fill="#4a4a4a"/><rect x="16" y="480" width="8" height="1.4" fill="#4a4a4a"/><rect x="2" y="500" width="22" height="1.4" fill="#4a4a4a"/><rect x="16" y="520" width="8" height="1.4" fill="#4a4a4a"/><rect x="16" y="540" width="8" height="1.4" fill="#4a4a4a"/><rect x="16" y="560" width="8" height="1.4" fill="#4a4a4a"/><rect x="16" y="580" width="8" height="1.4" fill="#4a4a4a"/><rect x="2" y="600" width="22" height="1.4" fill="#4a4a4a"/><rect x="16" y="620" width="8" height="1.4" fill="#4a4a4a"/><rect x="16" y="640" width="8" height="1.4" fill="#4a4a4a"/><rect x="16" y="660" width="8" height="1.4" fill="#4a4a4a"/><rect x="16" y="680" width="8" height="1.4" fill="#4a4a4a"/><rect x="2" y="700" width="22" height="1.4" fill="#4a4a4a"/><rect x="16" y="720" width="8" height="1.4" fill="#4a4a4a"/><rect x="16" y="740" width="8" height="1.4" fill="#4a4a4a"/><rect x="16" y="760" width="8" height="1.4" fill="#4a4a4a"/><rect x="16" y="780" width="8" height="1.4" fill="#4a4a4a"/><rect x="2" y="800" width="22" height="1.4" fill="#4a4a4a"/><rect x="16" y="820" width="8" height="1.4" fill="#4a4a4a"/><rect x="16" y="840" width="8" height="1.4" fill="#4a4a4a"/><rect x="16" y="860" width="8" height="1.4" fill="#4a4a4a"/><rect x="16" y="880" width="8" height="1.4" fill="#4a4a4a"/><rect x="2" y="900" width="22" height="1.4" fill="#4a4a4a"/><rect x="16" y="920" width="8" height="1.4" fill="#4a4a4a"/><rect x="16" y="940" width="8" height="1.4" fill="#4a4a4a"/><rect x="16" y="960" width="8" height="1.4" fill="#4a4a4a"/><rect x="16" y="980" width="8" height="1.4" fill="#4a4a4a"/><rect x="2" y="1000" width="22" height="1.4" fill="#4a4a4a"/><rect x="16" y="1020" width="8" height="1.4" fill="#4a4a4a"/><rect x="16" y="1040" width="8" height="1.4" fill="#4a4a4a"/><rect x="16" y="1060" width="8" height="1.4" fill="#4a4a4a"/><rect x="16" y="1080" width="8" height="1.4" fill="#4a4a4a"/><rect x="2" y="1100" width="22" height="1.4" fill="#4a4a4a"/><rect x="16" y="1120" width="8" height="1.4" fill="#4a4a4a"/><rect x="16" y="1140" width="8" height="1.4" fill="#4a4a4a"/><rect x="16" y="1160" width="8" height="1.4" fill="#4a4a4a"/><rect x="16" y="1180" width="8" height="1.4" fill="#4a4a4a"/></svg>
<div class="a" style="left:532px;top:192px;width:14px;height:40px;"><div style="position:absolute;left:14px;top:0;transform-origin:0 0;transform:rotate(90deg);font-size:15px;color:#474747;line-height:14px;white-space:nowrap">0</div></div>
<div class="a" style="left:532px;top:292px;width:14px;height:40px;"><div style="position:absolute;left:14px;top:0;transform-origin:0 0;transform:rotate(90deg);font-size:15px;color:#474747;line-height:14px;white-space:nowrap">50</div></div>
<div class="a" style="left:532px;top:392px;width:14px;height:40px;"><div style="position:absolute;left:14px;top:0;transform-origin:0 0;transform:rotate(90deg);font-size:15px;color:#474747;line-height:14px;white-space:nowrap">100</div></div>
<div class="a" style="left:532px;top:492px;width:14px;height:40px;"><div style="position:absolute;left:14px;top:0;transform-origin:0 0;transform:rotate(90deg);font-size:15px;color:#474747;line-height:14px;white-space:nowrap">150</div></div>
<div class="a" style="left:532px;top:592px;width:14px;height:40px;"><div style="position:absolute;left:14px;top:0;transform-origin:0 0;transform:rotate(90deg);font-size:15px;color:#474747;line-height:14px;white-space:nowrap">200</div></div>
<div class="a" style="left:532px;top:692px;width:14px;height:40px;"><div style="position:absolute;left:14px;top:0;transform-origin:0 0;transform:rotate(90deg);font-size:15px;color:#474747;line-height:14px;white-space:nowrap">250</div></div>
<div class="a" style="left:532px;top:792px;width:14px;height:40px;"><div style="position:absolute;left:14px;top:0;transform-origin:0 0;transform:rotate(90deg);font-size:15px;color:#474747;line-height:14px;white-space:nowrap">300</div></div>
<div class="a" style="left:532px;top:892px;width:14px;height:40px;"><div style="position:absolute;left:14px;top:0;transform-origin:0 0;transform:rotate(90deg);font-size:15px;color:#474747;line-height:14px;white-space:nowrap">350</div></div>
<div class="a" style="left:532px;top:992px;width:14px;height:40px;"><div style="position:absolute;left:14px;top:0;transform-origin:0 0;transform:rotate(90deg);font-size:15px;color:#474747;line-height:14px;white-space:nowrap">400</div></div>
<div class="a" style="left:532px;top:1092px;width:14px;height:40px;"><div style="position:absolute;left:14px;top:0;transform-origin:0 0;transform:rotate(90deg);font-size:15px;color:#474747;line-height:14px;white-space:nowrap">450</div></div>
<div class="a" style="left:532px;top:1192px;width:14px;height:40px;"><div style="position:absolute;left:14px;top:0;transform-origin:0 0;transform:rotate(90deg);font-size:15px;color:#474747;line-height:14px;white-space:nowrap">500</div></div>
<div class="a" style="left:532px;top:1292px;width:14px;height:40px;"><div style="position:absolute;left:14px;top:0;transform-origin:0 0;transform:rotate(90deg);font-size:15px;color:#474747;line-height:14px;white-space:nowrap">550</div></div>
<div class="a" style="left:556px;top:190px;width:750px;height:160px;background:#ffffff;"></div>
<div class="a" style="left:556px;top:350px;width:750px;height:1034px;background:#eeeeee;"></div>
<div class="a" style="left:556px;top:350px;width:750px;height:1034px;background:transparent;border:2px dotted #cdcdcd;border-bottom:none"></div>
<div class="a" style="left:556px;top:1384px;width:1440px;height:2px;background:#8a8a8a;"></div>
<div class="a" style="left:577px;top:257px;width:48px;height:3px;background:#1c1c1c;"></div>
<div class="a" style="left:577px;top:270.5px;width:48px;height:3px;background:#1c1c1c;"></div>
<div class="a" style="left:577px;top:284px;width:48px;height:3px;background:#1c1c1c;"></div>
<div class="a" style="top:243.43px;font-size:51px;color:#15151c;font-weight:normal;letter-spacing:-1.486px;line-height:1;white-space:nowrap;left:780px;">Hello Universe!</div>
<svg style="left:1218.5px;top:243px;" width="59" height="58" viewBox="0 0 59 58"><path d="M50.22 25.55 L56.82 25.83 L56.82 32.17 L50.22 32.45 L48.90 37.04 L46.59 41.21 L51.06 46.08 L46.58 50.56 L41.71 46.09 L37.54 48.40 L32.95 49.72 L32.67 56.32 L26.33 56.32 L26.05 49.72 L21.46 48.40 L17.29 46.09 L12.42 50.56 L7.94 46.08 L12.41 41.21 L10.10 37.04 L8.78 32.45 L2.18 32.17 L2.18 25.83 L8.78 25.55 L10.10 20.96 L12.41 16.79 L7.94 11.92 L12.42 7.44 L17.29 11.91 L21.46 9.60 L26.05 8.28 L26.33 1.68 L32.67 1.68 L32.95 8.28 L37.54 9.60 L41.71 11.91 L46.58 7.44 L51.06 11.92 L46.59 16.79 L48.90 20.96 Z" fill="none" stroke="#15151c" stroke-width="4.2" stroke-linejoin="round"/><circle cx="29.5" cy="29" r="5.8" fill="none" stroke="#15151c" stroke-width="3.7"/></svg>
<div class="a" style="left:566px;top:360px;width:730px;height:151px;background:transparent;border:2px dotted #9a9a9a"></div>
<div class="a" style="left:576px;top:371px;width:710px;height:55px;background:transparent;border:2.5px dotted #2f7fe6;border-top:none"></div>
<div class="a" style="left:576px;top:344px;width:710px;height:28px;background:#4a90e2;border:1.5px solid #86b6f0"></div>
<svg style="left:582px;top:350px;" width="19" height="18" viewBox="0 0 19 18"><g fill="#fff"><path d="M9.5 0 L13 4 H11 V7 H8 V4 H6 Z M9.5 18 L13 14 H11 V11 H8 V14 H6 Z M0 9 L4 5.5 V7.5 H7 V10.5 H4 V12.5 Z M19 9 L15 5.5 V7.5 H12 V10.5 H15 V12.5 Z"/><rect x="8" y="6" width="3" height="6"/><rect x="6" y="7.5" width="7" height="3"/></g></svg>
<div class="a" style="top:348.57px;font-size:20px;color:#ffffff;font-weight:normal;letter-spacing:-0.960px;line-height:1;white-space:nowrap;left:613px;">linearlayoutitem12</div>
<div class="a" style="left:576px;top:437px;width:62px;height:64px;background:repeating-conic-gradient(#8e8e8e 0 25%,#ececec 0 50%) 0 0/3px 3px;"></div>
<div class="a" style="left:582px;top:443px;width:50px;height:52px;background:#eeeeee;"></div>
<div class="a" style="left:649px;top:437px;width:564px;height:64px;background:repeating-conic-gradient(#8e8e8e 0 25%,#ececec 0 50%) 0 0/3px 3px;"></div>
<div class="a" style="left:655px;top:443px;width:552px;height:52px;background:#eeeeee;"></div>
<div class="a" style="left:1224px;top:437px;width:62px;height:64px;background:repeating-conic-gradient(#8e8e8e 0 25%,#ececec 0 50%) 0 0/3px 3px;"></div>
<div class="a" style="left:1230px;top:443px;width:50px;height:52px;background:#eeeeee;"></div>
<div class="a" style="left:638px;top:437px;width:11px;height:2px;background:transparent;border-top:2px dotted #8e8e8e"></div>
<div class="a" style="left:638px;top:499px;width:11px;height:2px;background:transparent;border-top:2px dotted #8e8e8e"></div>
<div class="a" style="left:1213px;top:437px;width:11px;height:2px;background:transparent;border-top:2px dotted #8e8e8e"></div>
<div class="a" style="left:1213px;top:499px;width:11px;height:2px;background:transparent;border-top:2px dotted #8e8e8e"></div>
<div class="a" style="left:1283px;top:385px;width:27px;height:27px;background:#5590e0;border-radius:5px"></div>
<svg style="left:1288px;top:390px;" width="17" height="17" viewBox="0 0 17 17"><path d="M8.5 0 V17 M0 8.5 H17" stroke="#fff" stroke-width="2.6"/></svg>
<div class="a" style="left:918px;top:424px;width:27px;height:27px;background:#5590e0;border-radius:5px"></div>
<svg style="left:923px;top:429px;" width="17" height="17" viewBox="0 0 17 17"><path d="M8.5 0 V17 M0 8.5 H17" stroke="#fff" stroke-width="2.6"/></svg>
<div class="a" style="left:566px;top:511px;width:730px;height:695px;background:#ffffff;border-radius:12px"></div>
<svg style="left:619px;top:554px;" width="54" height="54" viewBox="0 0 54 54"><circle cx="27" cy="27" r="27" fill="#2b2b2b"/><circle cx="27" cy="18" r="8" fill="#fff"/><path d="M10 42 Q13 30 27 30 Q41 30 44 42 Q37 49 27 49 Q17 49 10 42 Z" fill="#fff"/></svg>
<div class="a" style="top:549.77px;font-size:33px;color:#2e2e2e;font-weight:bold;letter-spacing:-1.646px;line-height:1;white-space:nowrap;left:723.5px;">Welcome to React Native!</div>
<div class="a" style="left:586px;top:636px;width:690px;height:363px;background:transparent;border:2px dotted #c4c4c4"></div>
<div class="a" style="left:1100px;top:636px;width:2px;height:363px;background:transparent;border-left:2px dotted #cfcfcf"></div>
<div class="a" style="left:588px;top:816px;width:512px;height:2px;background:transparent;border-top:2px dotted #cfcfcf"></div>
<div class="a" style="left:621px;top:640px;width:450px;height:175px;background:#ffffff;border:2px solid #d6d6d6;border-radius:11px"></div>
<div class="a" style="left:621px;top:820px;width:450px;height:175px;background:#ffffff;border:2px solid #d6d6d6;border-radius:11px"></div>
<div class="a" style="top:670.47px;font-size:33px;color:#999999;font-weight:normal;letter-spacing:-3.506px;line-height:1;white-space:nowrap;left:646.6px;">iOS</div>
<div class="a" style="top:850.87px;font-size:33px;color:#999999;font-weight:normal;letter-spacing:-0.708px;line-height:1;white-space:nowrap;left:646.6px;">Android</div>
<div class="a" style="left:584px;top:1045px;width:693px;height:142px;background:#dcdcdc;border-radius:12px"></div>
<div class="a" style="top:1072.61px;font-size:32px;color:#a9a9a9;font-weight:normal;letter-spacing:-0.057px;line-height:1;white-space:nowrap;left:622.6px;">Now developing mobile apps are much</div>
<div class="a" style="top:1117.91px;font-size:32px;color:#a9a9a9;font-weight:normal;letter-spacing:-0.230px;line-height:1;white-space:nowrap;left:622.6px;">easier with React Native.</div>
<div class="a" style="left:567px;top:1247px;width:728px;height:96px;background:#ffffff;border:2px solid #c9c9c9;border-radius:10px"></div>
<div class="a" style="top:1277.51px;font-size:32px;color:#13131a;font-weight:bold;letter-spacing:-1.047px;line-height:1;white-space:nowrap;left:869.7px;">Click Me</div>
<div class="a" style="top:1394.29px;font-size:26px;color:#cfcfcf;font-weight:normal;letter-spacing:-1.428px;line-height:1;white-space:nowrap;left:588.3px;">mainpage</div>
<div class="a" style="top:1394.29px;font-size:26px;color:#cfcfcf;font-weight:normal;letter-spacing:-1.250px;line-height:1;white-space:nowrap;left:748.6px;">content1</div>
<div class="a" style="top:1394.29px;font-size:26px;color:#cfcfcf;font-weight:normal;letter-spacing:-1.621px;line-height:1;white-space:nowrap;left:898px;">page_content1</div>
<div class="a" style="top:1394.29px;font-size:26px;color:#cfcfcf;font-weight:normal;letter-spacing:-1.036px;line-height:1;white-space:nowrap;left:1110px;">linearlayout5</div>
<div class="a" style="top:1394.29px;font-size:26px;color:#4a90e2;font-weight:normal;letter-spacing:-0.883px;line-height:1;white-space:nowrap;left:1301px;">linearlayoutitem12</div>
<svg style="left:714px;top:1399px;" width="14" height="22" viewBox="0 0 14 22"><path d="M2.5 2 L11.5 10.5 L2.5 19" fill="none" stroke="#cfcfcf" stroke-width="2.6"/></svg>
<svg style="left:863px;top:1399px;" width="14" height="22" viewBox="0 0 14 22"><path d="M2.5 2 L11.5 10.5 L2.5 19" fill="none" stroke="#cfcfcf" stroke-width="2.6"/></svg>
<svg style="left:1075px;top:1399px;" width="14" height="22" viewBox="0 0 14 22"><path d="M2.5 2 L11.5 10.5 L2.5 19" fill="none" stroke="#cfcfcf" stroke-width="2.6"/></svg>
<svg style="left:1267px;top:1399px;" width="14" height="22" viewBox="0 0 14 22"><path d="M2.5 2 L11.5 10.5 L2.5 19" fill="none" stroke="#cfcfcf" stroke-width="2.6"/></svg>
<div class="a" style="left:532px;top:1434px;width:1464px;height:2px;background:#111;"></div>
<div class="a" style="left:1996px;top:163px;width:2px;height:1273px;background:#0c0c0c;"></div>
<div class="a" style="left:1998px;top:163px;width:560px;height:75px;background:#111111;"></div>
<div class="a" style="left:1998px;top:163px;width:112px;height:75px;background:#414141;"></div>
<div class="a" style="left:1998px;top:164px;width:112px;height:4px;background:#4a90e2;"></div>
<svg style="left:2041px;top:183px;" width="26" height="37" viewBox="0 0 26 37"><path d="M18 2 Q19.5 0.5 21.5 1.5 L24 3 Q25.5 4.3 24.5 6 L7 33.5 L1.5 36 L1 30 Z M17 6.5 L22 9.5" fill="none" stroke="#f0f0f0" stroke-width="2.6" stroke-linejoin="round"/></svg>
<svg style="left:2148px;top:184px;" width="37" height="34" viewBox="0 0 37 34"><path d="M14 33 Q2 33 1 22 Q0 9 13 4 Q24 0 31 8 Q35 12 34 15 Q33 20 26 19 Q20 19 19 24 Q19 27 20 29 Q21 33 14 33 Z" fill="none" stroke="#858585" stroke-width="2.4"/><g fill="#858585"><circle cx="14" cy="10" r="2.6"/><circle cx="21.5" cy="9.5" r="2.6"/><circle cx="9" cy="16.5" r="2.6"/><circle cx="7.5" cy="24" r="2.6"/></g><path d="M34 0.5 L22 24 Q17 25 16 32 Q22 33 25 27 Z" fill="#858585"/></svg>
<svg style="left:2260px;top:183px;" width="37" height="37" viewBox="0 0 37 37"><circle cx="14" cy="14.4" r="12.6" fill="none" stroke="#858585" stroke-width="2.8"/><path d="M15 14.5 L36 21.5 L30 25 L36 31.5 L33.5 34.5 L27 28 L22.5 35.5 Z" fill="#111" stroke="#858585" stroke-width="2.6" stroke-linejoin="round"/></svg>
<svg style="left:2376px;top:184px;" width="28" height="36" viewBox="0 0 28 36"><path d="M14 1.2 L26.8 7 V20 Q26.8 29 14 34.8 Q1.2 29 1.2 20 V7 Z" fill="none" stroke="#858585" stroke-width="2"/></svg>
<div class="a" style="left:2014px;top:254px;width:528px;height:55px;background:#2d2d2d;border:2px solid #626262;border-radius:6px"></div>
<svg style="left:2036px;top:273px;" width="21" height="21" viewBox="0 0 21 21"><circle cx="9" cy="9" r="8" fill="none" stroke="#e6e6e6" stroke-width="1.7"/><path d="M14.5 14.5 L20 20" stroke="#e6e6e6" stroke-width="1.7"/></svg>
<div class="a" style="top:270.88px;font-size:22px;color:#858585;font-weight:normal;letter-spacing:-0.631px;line-height:1;white-space:nowrap;left:2070px;">Search...</div>
<div class="a" style="left:1998px;top:326px;width:560px;height:2px;background:#4f4f4f;"></div>
<div class="a" style="top:355.68px;font-size:22px;color:#dedede;font-weight:normal;letter-spacing:-0.062px;line-height:1;white-space:nowrap;left:2018px;">Name</div>
<div class="a" style="left:2018px;top:394px;width:444px;height:55px;background:#2d2d2d;border:2px solid #5c5c5c;border-radius:6px"></div>
<div class="a" style="top:407.68px;font-size:24px;color:#dedede;font-weight:normal;letter-spacing:-0.811px;line-height:1;white-space:nowrap;left:2040px;">linearlayoutitem12</div>
<div class="a" style="top:485.78px;font-size:22px;color:#dedede;font-weight:normal;letter-spacing:0.116px;line-height:1;white-space:nowrap;left:2018px;">Insert</div>
<div class="a" style="left:2024px;top:523px;width:48px;height:48px;background:transparent;border:2px solid #585858;border-radius:4px"></div>
<svg style="left:2028px;top:524px;" width="42" height="42" viewBox="0 0 42 42"><rect x="6" y="1" width="34" height="37" fill="none" stroke="#d0d0d0" stroke-width="1.6" stroke-dasharray="3.5 2.5"/><g fill="#d0d0d0"><rect x="10.5" y="6" width="24" height="4"/><rect x="10.5" y="17" width="24" height="4"/></g><rect x="1" y="27.5" width="25" height="5" fill="#414141" stroke="#d0d0d0" stroke-width="1.5"/></svg>
<div class="a" style="left:1998px;top:599px;width:560px;height:49px;background:#1b1b1b;"></div>
<div class="a" style="top:610.14px;font-size:27px;color:#eeeeee;font-weight:normal;letter-spacing:-0.813px;line-height:1;white-space:nowrap;left:2018px;">Layout</div>
<div class="a" style="top:681.38px;font-size:22px;color:#dedede;font-weight:normal;letter-spacing:-0.059px;line-height:1;white-space:nowrap;left:2018px;">Width</div>
<div class="a" style="left:2018px;top:719px;width:444px;height:55px;background:#2d2d2d;border:2px solid #5c5c5c;border-radius:6px"></div>
<div class="a" style="top:811.38px;font-size:22px;color:#dedede;font-weight:normal;letter-spacing:-0.319px;line-height:1;white-space:nowrap;left:2018px;">Height</div>
<div class="a" style="left:2018px;top:849px;width:444px;height:55px;background:#2d2d2d;border:2px solid #5c5c5c;border-radius:6px"></div>
<div class="a" style="left:1998px;top:933px;width:560px;height:49px;background:#1b1b1b;"></div>
<div class="a" style="top:944.14px;font-size:27px;color:#eeeeee;font-weight:normal;letter-spacing:-1.081px;line-height:1;white-space:nowrap;left:2018px;">Behavior</div>
<div class="a" style="top:1014.68px;font-size:22px;color:#dedede;font-weight:normal;letter-spacing:-0.705px;line-height:1;white-space:nowrap;left:2019px;">Flex Grow</div>
<div class="a" style="left:2019px;top:1076px;width:335px;height:9px;background:#eeeeee;border:1.5px solid #9a9a9a;border-radius:5px"></div>
<div class="a" style="left:2019px;top:1076px;width:42px;height:9px;background:#3372ee;border-radius:5px 0 0 5px"></div>
<svg style="left:2043px;top:1065px;" width="32" height="32" viewBox="0 0 32 32"><circle cx="16" cy="16" r="15.5" fill="#3372ee"/></svg>
<div class="a" style="left:2366px;top:1054px;width:96px;height:55px;background:#2d2d2d;border:2px solid #5c5c5c;border-radius:6px"></div>
<div class="a" style="top:1068.18px;font-size:24px;color:#e6e6e6;font-weight:normal;letter-spacing:0.000px;line-height:1;white-space:nowrap;left:1814px;width:1200px;text-align:center;">1</div>
<div class="a" style="top:1147.68px;font-size:22px;color:#dedede;font-weight:normal;letter-spacing:-0.678px;line-height:1;white-space:nowrap;left:2019px;">Show</div>
<div class="a" style="left:2368px;top:1138px;width:74px;height:42px;background:#c8c8c8;border-radius:21px"></div>
<svg style="left:2400px;top:1138px;" width="42" height="42" viewBox="0 0 42 42"><circle cx="21" cy="21" r="21" fill="#4a90e2"/></svg>
<svg style="left:2477px;top:1144px;" width="26" height="25" viewBox="0 0 26 25"><g fill="none" stroke="#d8d8d8" stroke-width="2.4"><path d="M10 9 L14 5 Q17.5 1.5 21 5 Q24.5 8.5 21 12 L17 16"/><path d="M16 16 L12 20 Q8.5 23.5 5 20 Q1.5 16.5 5 13 L9 9"/><path d="M9 16 L17 8"/></g></svg>
<div class="a" style="left:1998px;top:1213px;width:560px;height:49px;background:#1b1b1b;"></div>
<div class="a" style="top:1224.14px;font-size:27px;color:#eeeeee;font-weight:normal;letter-spacing:-0.782px;line-height:1;white-space:nowrap;left:2018px;">Format</div>
<div class="a" style="top:1296.38px;font-size:22px;color:#dedede;font-weight:normal;letter-spacing:0.076px;line-height:1;white-space:nowrap;left:2019px;">Horizontal Align</div>
<div class="a" style="left:2018px;top:1333px;width:168px;height:61px;background:transparent;border:2px solid #6a6a6a;border-radius:3px"></div>
<svg style="left:2038px;top:1352px;" width="24" height="26" viewBox="0 0 24 26"><g fill="#d8d8d8"><rect x="0" y="0" width="24" height="2.2"/><rect x="0" y="7.5" width="16" height="2.2"/><rect x="0" y="15.5" width="24" height="2.2"/><rect x="0" y="23" width="16" height="2.2"/></g></svg>
<svg style="left:2090px;top:1352px;" width="24" height="26" viewBox="0 0 24 26"><g fill="#d8d8d8"><rect x="0.0" y="0" width="24" height="2.2"/><rect x="4.0" y="7.5" width="16" height="2.2"/><rect x="0.0" y="15.5" width="24" height="2.2"/><rect x="4.0" y="23" width="16" height="2.2"/></g></svg>
<svg style="left:2142px;top:1352px;" width="24" height="26" viewBox="0 0 24 26"><g fill="#d8d8d8"><rect x="0" y="0" width="24" height="2.2"/><rect x="8" y="7.5" width="16" height="2.2"/><rect x="0" y="15.5" width="24" height="2.2"/><rect x="8" y="23" width="16" height="2.2"/></g></svg>
<div class="a" style="left:46px;top:140px;width:88px;height:38px;background:#d5d5d5;box-shadow:0 1px 2px rgba(0,0,0,.3)"></div>
<div class="a" style="top:148.22px;font-size:21px;color:#333333;font-weight:normal;letter-spacing:0.363px;line-height:1;white-space:nowrap;left:59px;">Pages</div>
</div></body></html>
